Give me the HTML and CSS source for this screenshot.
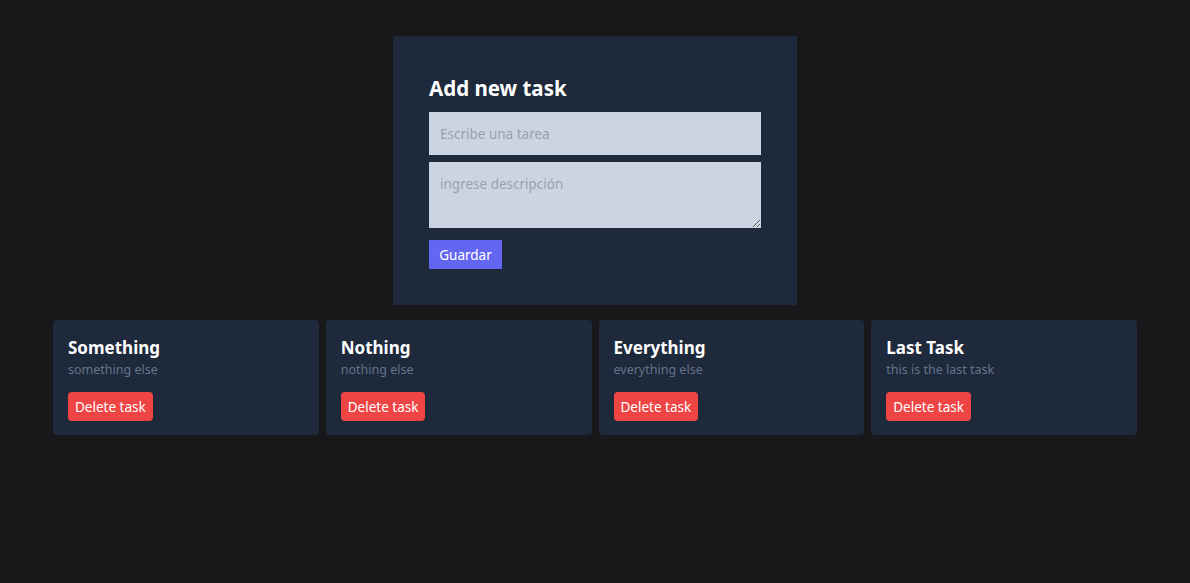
FILE: index.html
```html
<!DOCTYPE html>
<html lang="es">
<head>
<meta charset="utf-8">
<title>Tasks</title>
<link rel="stylesheet" href="styles.css">
</head>
<body>
<main class="page">
  <form class="task-form">
    <h1 class="form-title">Add new task</h1>
    <input class="field" type="text" placeholder="Escribe una tarea">
    <textarea class="field area" placeholder="ingrese descripción"></textarea>
    <button class="save" type="button">Guardar</button>
  </form>
  <section class="cards">
    <div class="card">
      <h2 class="card-title">Something</h2>
      <p class="card-desc">something else</p>
      <button class="delete" type="button">Delete task</button>
    </div>
    <div class="card">
      <h2 class="card-title">Nothing</h2>
      <p class="card-desc">nothing else</p>
      <button class="delete" type="button">Delete task</button>
    </div>
    <div class="card">
      <h2 class="card-title">Everything</h2>
      <p class="card-desc">everything else</p>
      <button class="delete" type="button">Delete task</button>
    </div>
    <div class="card">
      <h2 class="card-title">Last Task</h2>
      <p class="card-desc">this is the last task</p>
      <button class="delete" type="button">Delete task</button>
    </div>
  </section>
</main>
</body>
</html>
```
FILE: styles.css
```css
* { box-sizing: border-box; }
html, body {
  margin: 0;
  padding: 0;
  background: #18181a;
  font-family: "Noto Sans", "Open Sans", sans-serif;
  color: #fff;
}
.page {
  display: flex;
  flex-direction: column;
  align-items: center;
  padding-top: 36px;
}
.task-form {
  width: 404px;
  background: #1e293b;
  padding: 36px;
  display: flex;
  flex-direction: column;
}
.form-title {
  margin: 2px 0 10px;
  font-size: 20.5px;
  line-height: 28px;
  font-weight: 700;
}
.field {
  display: block;
  width: 100%;
  height: 43px;
  border: none;
  background: #cbd5e1;
  padding: 0 11px;
  font-family: inherit;
  font-size: 13.5px;
  color: #1e293b;
  margin: 0 0 7px;
  outline: none;
}
.field::placeholder { color: #98a1ae; }
.area {
  height: 66px;
  padding-top: 13px;
  resize: vertical;
  margin-bottom: 12px;
}
.save {
  align-self: flex-start;
  width: 73px;
  height: 29px;
  border: none;
  background: #6366f1;
  color: #fff;
  font-family: inherit;
  font-size: 13.5px;
  padding: 0;
}
.cards {
  margin-top: 15px;
  width: 1084px;
  display: grid;
  grid-template-columns: repeat(4, 1fr);
  gap: 7px;
}
.card {
  background: #1e293b;
  border-radius: 4px;
  height: 115px;
  padding: 15px 15px 14px;
}
.card-title {
  margin: 0;
  font-size: 17px;
  line-height: 26px;
  font-weight: 700;
}
.card-desc {
  margin: 0 0 14px;
  font-size: 12.5px;
  line-height: 17px;
  color: #64748b;
}
.delete {
  height: 29px;
  padding: 0 7px;
  border: none;
  border-radius: 4px;
  background: #ef4444;
  color: #fff;
  font-family: inherit;
  font-size: 13.5px;
}
```
